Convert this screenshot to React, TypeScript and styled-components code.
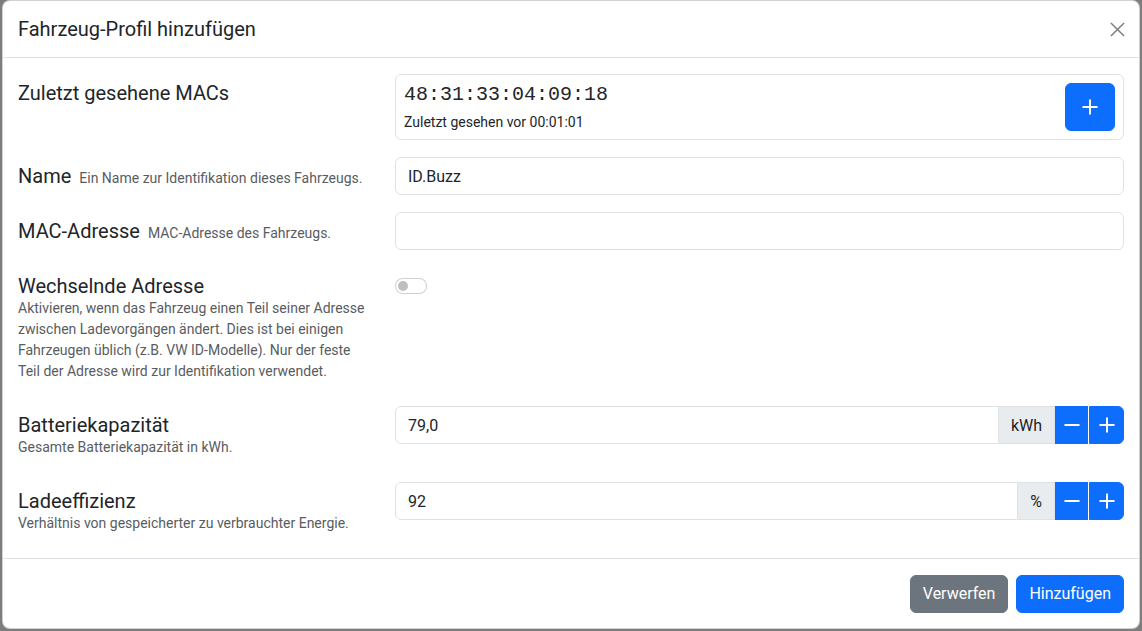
import React from "react";
import styled, { createGlobalStyle } from "styled-components";

const Global = createGlobalStyle`
  html, body { margin: 0; padding: 0; }
  body {
    background: #7d7d7d;
    font-family: Roboto, "Noto Sans", "Liberation Sans", sans-serif;
    color: #212529;
    -webkit-font-smoothing: antialiased;
  }
  * { box-sizing: border-box; }
`;

const Backdrop = styled.div`
  height: 631px;
  padding: 0 2px 2px 2px;
  overflow: hidden;
`;

const Modal = styled.div`
  width: 1138px;
  height: 629px;
  background: #fff;
  border: 1px solid rgba(0, 0, 0, 0.18);
  border-radius: 8px;
  display: flex;
  flex-direction: column;
`;

const Header = styled.div`
  display: flex;
  align-items: center;
  justify-content: space-between;
  padding: 16px 16px 16px 15px;
  border-bottom: 1px solid #dee2e6;
`;

const Title = styled.h5`
  margin: 0;
  font-size: 20px;
  font-weight: 400;
  line-height: 24px;
`;

const CloseButton = styled.button`
  width: 24px;
  height: 24px;
  padding: 0;
  margin-right: -6px;
  border: 0;
  background: transparent;
  display: flex;
  align-items: center;
  justify-content: center;
  opacity: 0.5;
`;

const Body = styled.div`
  padding: 16px 15px 16px 15px;
  flex: 1;
  border-bottom: 1px solid #dee2e6;
`;

const Row = styled.div<{ $gap?: number }>`
  display: grid;
  grid-template-columns: 353px 1fr;
  column-gap: 24px;
  margin-bottom: ${(p) => (p.$gap ?? 16)}px;
  &:last-child { margin-bottom: 0; }
`;

const Label = styled.div`
  padding: 7px 0;
`;

const LabelTitle = styled.span`
  font-size: 20px;
  line-height: 24px;
`;

const InlineHint = styled.span`
  font-size: 14px;
  color: #595c5f;
  margin-left: 8px;
`;

const BlockHint = styled.div`
  font-size: 14px;
  line-height: 21px;
  color: #595c5f;
`;

const Field = styled.div<{ $pad?: number }>`
  padding-top: ${(p) => p.$pad ?? 0}px;
`;

const MacCard = styled.div`
  display: flex;
  align-items: center;
  justify-content: space-between;
  border: 1px solid #dee2e6;
  border-radius: 6px;
  padding: 8px;
`;

const MacInfo = styled.div`
  display: flex;
  flex-direction: column;
`;

const MacValue = styled.div`
  font-family: "Liberation Mono", "Courier New", monospace;
  font-size: 20px;
  line-height: 24px;
  font-weight: 500;
`;

const MacSeen = styled.div`
  font-size: 14px;
  line-height: 18px;
  margin-top: 6px;
`;

const Button = styled.button<{ $variant?: "primary" | "secondary" }>`
  font-family: inherit;
  font-size: 16px;
  line-height: 24px;
  padding: 6px 12px;
  border-radius: 6px;
  border: 1px solid ${(p) => (p.$variant === "secondary" ? "#6c757d" : "#0d6efd")};
  background: ${(p) => (p.$variant === "secondary" ? "#6c757d" : "#0d6efd")};
  color: #fff;
  display: inline-flex;
  align-items: center;
  justify-content: center;
`;

const AddButton = styled(Button)`
  width: 50px;
  height: 48px;
  padding: 0;
`;

const Input = styled.input`
  display: block;
  width: 100%;
  height: 38px;
  padding: 6px 12px;
  font-family: inherit;
  font-size: 16px;
  color: #212529;
  border: 1px solid #dee2e6;
  border-radius: 6px;
  outline: none;
  background: #fff;
`;

const Group = styled.div`
  display: flex;
  height: 38px;
`;

const GroupInput = styled(Input)`
  flex: 1;
  border-radius: 6px 0 0 6px;
`;

const Addon = styled.span`
  display: flex;
  align-items: center;
  padding: 0 12px;
  font-size: 16px;
  background: #e9ecef;
  border: 1px solid #dee2e6;
  border-left: 0;
`;

const StepButton = styled(Button)<{ $last?: boolean }>`
  width: ${(p) => (p.$last ? 35 : 33)}px;
  padding: 0;
  border-radius: ${(p) => (p.$last ? "0 6px 6px 0" : "0")};
  margin-left: ${(p) => (p.$last ? 1 : 0)}px;
`;

const Switch = styled.span`
  display: block;
  position: relative;
  width: 32px;
  height: 16px;
  border: 1px solid rgba(0, 0, 0, 0.18);
  border-radius: 8px;
  background: #fff;
  &::after {
    content: "";
    position: absolute;
    left: 2px;
    top: 2px;
    width: 10px;
    height: 10px;
    border-radius: 50%;
    background: #bfbfbf;
  }
`;

const Footer = styled.div`
  display: flex;
  justify-content: flex-end;
  gap: 8px;
  padding: 16px 15px 15px;
`;

const PlusIcon = () => (
  <svg width="16" height="16" viewBox="0 0 16 16" fill="none" stroke="#fff" strokeWidth="2">
    <path d="M8 0.5v15M0.5 8h15" />
  </svg>
);

const MinusIcon = () => (
  <svg width="16" height="16" viewBox="0 0 16 16" fill="none" stroke="#fff" strokeWidth="2">
    <path d="M0.5 8h15" />
  </svg>
);

const CloseIcon = () => (
  <svg width="15" height="15" viewBox="0 0 16 16" fill="none" stroke="#000" strokeWidth="1.6">
    <path d="M1 1l14 14M15 1L1 15" />
  </svg>
);

export default function App() {
  return (
    <>
      <Global />
      <Backdrop>
        <Modal>
          <Header>
            <Title>Fahrzeug-Profil hinzufügen</Title>
            <CloseButton aria-label="Schließen">
              <CloseIcon />
            </CloseButton>
          </Header>
          <Body>
            <Row $gap={17}>
              <Label>
                <LabelTitle>Zuletzt gesehene MACs</LabelTitle>
              </Label>
              <MacCard>
                <MacInfo>
                  <MacValue>48:31:33:04:09:18</MacValue>
                  <MacSeen>Zuletzt gesehen vor 00:01:01</MacSeen>
                </MacInfo>
                <AddButton>
                  <PlusIcon />
                </AddButton>
              </MacCard>
            </Row>
            <Row $gap={17}>
              <Label>
                <LabelTitle>Name</LabelTitle>
                <InlineHint>Ein Name zur Identifikation dieses Fahrzeugs.</InlineHint>
              </Label>
              <Field>
                <Input defaultValue="ID.Buzz" />
              </Field>
            </Row>
            <Row $gap={17}>
              <Label>
                <LabelTitle>MAC-Adresse</LabelTitle>
                <InlineHint>MAC-Adresse des Fahrzeugs.</InlineHint>
              </Label>
              <Field>
                <Input defaultValue="" />
              </Field>
            </Row>
            <Row $gap={17}>
              <Label>
                <LabelTitle>Wechselnde Adresse</LabelTitle>
                <BlockHint>
                  Aktivieren, wenn das Fahrzeug einen Teil seiner Adresse zwischen
                  Ladevorgängen ändert. Dies ist bei einigen Fahrzeugen üblich (z.B. VW
                  ID-Modelle). Nur der feste Teil der Adresse wird zur Identifikation
                  verwendet.
                </BlockHint>
              </Label>
              <Field $pad={11}>
                <Switch />
              </Field>
            </Row>
            <Row $gap={17}>
              <Label>
                <LabelTitle>Batteriekapazität</LabelTitle>
                <BlockHint>Gesamte Batteriekapazität in kWh.</BlockHint>
              </Label>
              <Field>
                <Group>
                  <GroupInput defaultValue="79,0" />
                  <Addon>kWh</Addon>
                  <StepButton>
                    <MinusIcon />
                  </StepButton>
                  <StepButton $last>
                    <PlusIcon />
                  </StepButton>
                </Group>
              </Field>
            </Row>
            <Row>
              <Label>
                <LabelTitle>Ladeeffizienz</LabelTitle>
                <BlockHint>Verhältnis von gespeicherter zu verbrauchter Energie.</BlockHint>
              </Label>
              <Field>
                <Group>
                  <GroupInput defaultValue="92" />
                  <Addon>%</Addon>
                  <StepButton>
                    <MinusIcon />
                  </StepButton>
                  <StepButton $last>
                    <PlusIcon />
                  </StepButton>
                </Group>
              </Field>
            </Row>
          </Body>
          <Footer>
            <Button $variant="secondary">Verwerfen</Button>
            <Button>Hinzufügen</Button>
          </Footer>
        </Modal>
      </Backdrop>
    </>
  );
}
